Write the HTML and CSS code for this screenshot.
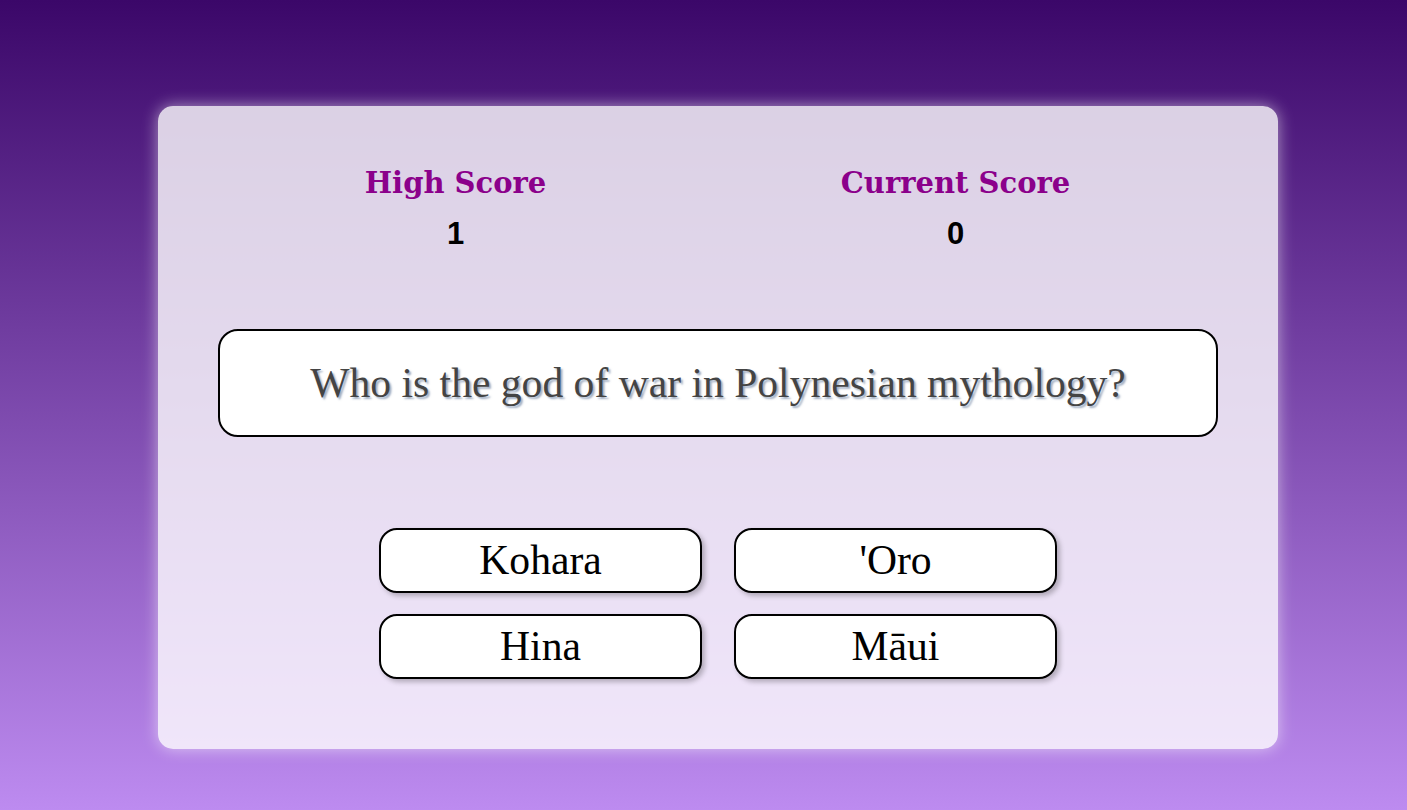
FILE: index.html
```html
<!DOCTYPE html>
<html lang="en">
<head>
<meta charset="utf-8">
<title>Quiz</title>
<link rel="stylesheet" href="styles.css">
</head>
<body>
<main class="card">
  <section class="scores">
    <div class="score">
      <h2 class="score-title">High Score</h2>
      <div class="score-value">1</div>
    </div>
    <div class="score">
      <h2 class="score-title">Current Score</h2>
      <div class="score-value">0</div>
    </div>
  </section>
  <section class="question">Who is the god of war in Polynesian mythology?</section>
  <section class="answers">
    <button class="answer">Kohara</button>
    <button class="answer">'Oro</button>
    <button class="answer">Hina</button>
    <button class="answer">Māui</button>
  </section>
</main>
</body>
</html>
```

FILE: styles.css
```css
html, body {
  margin: 0;
  height: 100%;
}
body {
  min-height: 810px;
  background: linear-gradient(to bottom, #3b0769 0%, #bd8bf0 100%);
  font-family: "Liberation Serif", serif;
  box-sizing: border-box;
  padding-top: 106px;
  padding-left: 158px;
}
.card {
  width: 1120px;
  height: 643px;
  box-sizing: border-box;
  background: rgba(255, 255, 255, 0.8);
  border-radius: 15px;
  box-shadow: 0 0 16px rgba(255, 255, 255, 0.55);
  padding: 60px 60px 0 60px;
  display: flex;
  flex-direction: column;
  align-items: center;
}
.scores {
  display: grid;
  grid-template-columns: 500px 500px;
  margin-left: -25px;
  width: 1000px;
}
.score {
  display: flex;
  flex-direction: column;
  align-items: center;
}
.score-title {
  margin: 0;
  font-family: Georgia, "DejaVu Serif", serif;
  font-weight: bold;
  font-size: 29px;
  line-height: 34px;
  color: #8b008b;
}
.score-value {
  margin-top: 17px;
  font-family: "Liberation Sans", Arial, sans-serif;
  font-weight: bold;
  font-size: 31px;
  line-height: 34px;
  color: #000;
}
.question {
  margin-top: 78px;
  width: 1000px;
  height: 108px;
  box-sizing: border-box;
  background: #fff;
  border: 2px solid #000;
  border-radius: 20px;
  display: flex;
  align-items: center;
  justify-content: center;
  font-size: 41.6px;
  color: #444;
  text-shadow: 2px 2px 2px rgba(120, 140, 170, 0.7);
}
.answers {
  margin-top: 91px;
  display: grid;
  grid-template-columns: 323px 323px;
  column-gap: 32px;
  row-gap: 21px;
}
.answer {
  height: 65px;
  box-sizing: border-box;
  background: #fff;
  border: 2px solid #000;
  border-radius: 18px;
  box-shadow: 3px 3px 5px rgba(0, 0, 0, 0.25);
  font-family: "Liberation Serif", serif;
  font-size: 41.6px;
  color: #000;
  padding: 0;
  line-height: 1;
}
```
